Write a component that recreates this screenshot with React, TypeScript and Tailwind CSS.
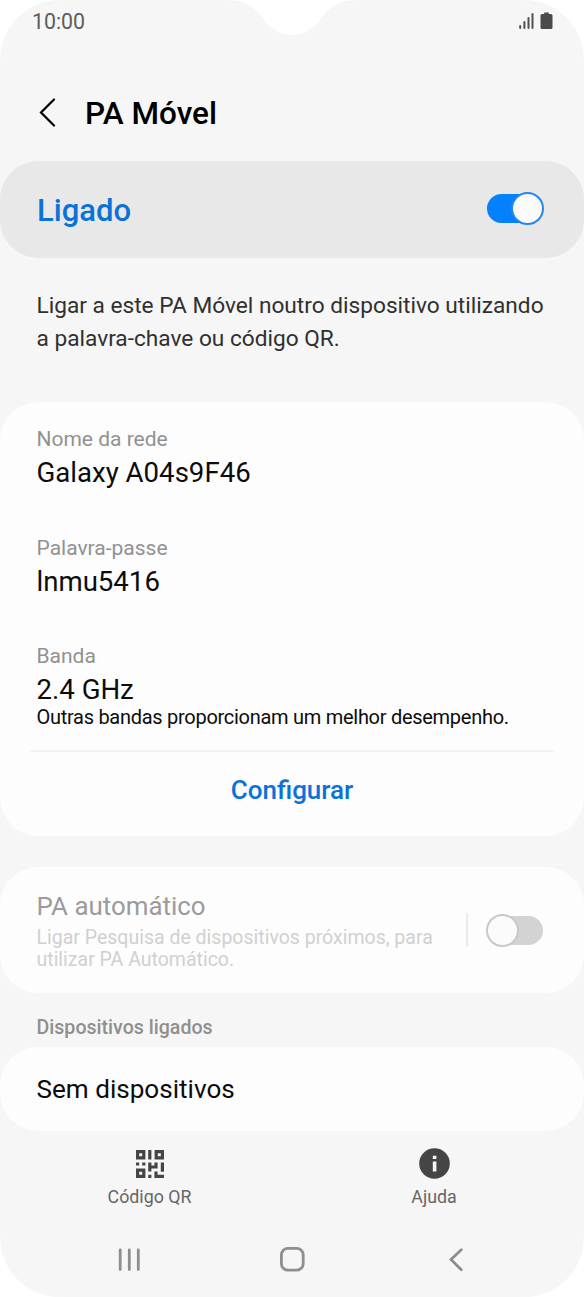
import clsx from "clsx";

const fields = [
  { label: "Nome da rede", value: "Galaxy A04s9F46" },
  { label: "Palavra-passe", value: "lnmu5416" },
  { label: "Banda", value: "2.4 GHz" },
];

function Toggle({ on }: { on: boolean }) {
  return (
    <div
      className={clsx(
        "relative h-[29px] w-[56px] shrink-0 rounded-full",
        on ? "bg-[#0381fe]" : "bg-[#d3d3d3]"
      )}
    >
      <span
        className={clsx(
          "absolute -top-[2px] size-[33px] rounded-full border-2 bg-[#fbfbfb]",
          on ? "-right-px border-[#2487ee]" : "-left-px border-[#c8c8c8]"
        )}
      />
    </div>
  );
}

function StatusBar() {
  return (
    <header className="relative flex h-[42px] items-center justify-between pr-[31px] pl-8 text-[#5c5c5c]">
      <span className="pt-px text-[21.300px] leading-[42px]">10:00</span>
      <svg
        className="absolute top-0 left-[230px]"
        width="124"
        height="36"
        viewBox="0 0 124 36"
        fill="#fff"
      >
        <path d="M0 0C16 1 26 8 33 18.500C40 29 51 35 62 35C73 35 84 29 91 18.500C98 8 108 1 124 0Z" />
      </svg>
      <svg width="34" height="18" viewBox="0 0 34 18">
        <path
          d="M1.200 14V16M5.400 10V16M9.500 6V16M13.500 2V16"
          stroke="#505050"
          strokeWidth="2"
          strokeLinecap="round"
        />
        <path
          d="M25.200 0.500h4.600v1.500h2.200q1.500 0 1.500 1.500v12q0 1.500-1.500 1.500h-9q-1.500 0-1.500-1.500v-12q0-1.500 1.500-1.500h2.200z"
          fill="#4a4a4a"
        />
      </svg>
    </header>
  );
}

function QrIcon() {
  return (
    <svg width="28" height="28" viewBox="0 0 28 28">
      <path
        d="M1.600 1.600h6.200v6.200h-6.200zM20.200 1.600h6.200v6.200h-6.200zM1.600 20.200h6.200v6.200h-6.200z"
        fill="none"
        stroke="#454545"
        strokeWidth="3.200"
      />
      <path
        d="M12.200 0h3.200v9.400h-3.200zM0 12.400h3.200v3.200h-3.200zM6.200 12.400h3.200v3.200h-3.200zM12.200 12.400h3.200v3h3v-3h3.200v6.200h-6.200v3h-3.200zM24.800 12.400h3.200v9.300h-3.200zM12.200 24.800h3.200v3.200h-3.200zM18.400 21.500h3.200v3.300h6.400v3.200h-9.600z"
        fill="#454545"
      />
    </svg>
  );
}

function InfoIcon() {
  return (
    <svg width="31" height="31" viewBox="0 0 31 31">
      <circle cx="15.500" cy="15.500" r="15.300" fill="#454545" />
      <path d="M13.800 7.800h3.600v3.200h-3.600zM13.800 13.500h3.600v10h-3.600z" fill="#f6f6f6" />
    </svg>
  );
}

function NavBar() {
  return (
    <nav className="flex h-[76px] justify-between pr-[120px] pl-[118px]">
      <svg width="22" height="76" viewBox="0 0 22 76" stroke="#8e8e8e" strokeWidth="2.800" strokeLinecap="round">
        <path d="M2.200 28.800V48.500M11.300 28.800V48.500M20.300 28.800V48.500" />
      </svg>
      <svg width="26" height="76" viewBox="0 0 26 76" fill="none" stroke="#8e8e8e" strokeWidth="2.800">
        <rect x="1.400" y="27.400" width="21.800" height="21.800" rx="6.500" />
      </svg>
      <svg width="18" height="76" viewBox="0 0 18 76" fill="none" stroke="#8e8e8e" strokeWidth="2.800" strokeLinecap="round">
        <path d="M15.300 28.700L5 38.500L15.300 48.700" />
      </svg>
    </nav>
  );
}

export default function App() {
  return (
    <div className="h-[1297px] w-[584px] bg-white font-['Roboto',sans-serif]">
      <div className="flex h-full flex-col overflow-hidden rounded-[60px] bg-[#f6f6f6]">
        <StatusBar />

        <div className="flex h-[119px] items-center gap-[29px] pt-[22px] pl-[39px]">
          <svg width="17" height="30" viewBox="0 0 17 30" fill="none" stroke="#000" strokeWidth="2.200" strokeLinecap="round">
            <path d="M15 1.500L2 14.500L15 27.500" />
          </svg>
          <h1 className="pt-[3px] text-[31.500px] leading-9 font-medium text-black">PA Móvel</h1>
        </div>

        <section className="flex h-[97px] items-center justify-between rounded-[38px] bg-[#e8e8e8] pr-[41px] pl-[37px]">
          <span className="pt-[2px] text-[31px] leading-9 font-medium text-[#0a72d8]">Ligado</span>
          <div className="pb-[2px]">
            <Toggle on />
          </div>
        </section>

        <p className="h-[144px] px-[36.500px] pt-[30.500px] text-[22.660px] leading-[33px] whitespace-nowrap text-[#303030]">
          Ligar a este PA Móvel noutro dispositivo utilizando
          <br />a palavra-chave ou código QR.
        </p>

        <section className="flex h-[434px] flex-col rounded-[38px] bg-[#fdfdfd] pt-[24px]">
          <dl className="flex flex-col gap-[40.600px] px-[36.500px]">
            {fields.map((field) => (
              <div key={field.label}>
                <dt className="text-[21px] leading-[26px] text-[#919191]">{field.label}</dt>
                <dd className="text-[27.600px] leading-[42px] text-[#0c0c0c]">{field.value}</dd>
              </div>
            ))}
          </dl>
          <p className="-mt-[2px] px-[36.500px] text-[20px] leading-[17px] tracking-[-0.280px] whitespace-nowrap text-[#0c0c0c]">
            Outras bandas proporcionam um melhor desempenho.
          </p>
          <div className="mx-[30px] mt-[24px] h-[2px] bg-[#f3f3f3]" />
          <button className="flex-1 pb-[7px] text-[26px] font-medium text-[#0a72d8]">Configurar</button>
        </section>

        <section className="mt-[31px] flex h-[126px] items-center rounded-[38px] bg-[#fdfdfd] pr-[41px] pl-[36.500px]">
          <div className="flex-1 pb-px whitespace-nowrap">
            <h2 className="text-[25.900px] leading-[39px] text-[#9b9b9b]">PA automático</h2>
            <p className="pt-[0.500px] text-[19.500px] leading-[22.500px] text-[#d0d0d0]">
              Ligar Pesquisa de dispositivos próximos, para
              <br />
              utilizar PA Automático.
            </p>
          </div>
          <div className="mr-[19px] mb-px h-[34px] w-[2px] bg-[#ebebeb]" />
          <Toggle on={false} />
        </section>

        <h3 className="h-[54px] px-[36.500px] pt-[15px] text-[19.600px] leading-[39px] font-medium text-[#8f8f8f]">
          Dispositivos ligados
        </h3>
        <section className="flex h-[84px] items-center rounded-[38px] bg-[#fdfdfd] px-[36.500px] pt-[2px] text-[26.100px] text-[#0c0c0c]">
          Sem dispositivos
        </section>

        <div className="flex h-[90px] text-[17.800px] leading-6 text-[#666]">
          <button className="ml-[50px] flex w-[199px] flex-col items-center pt-[19px]">
            <QrIcon />
            <span className="pt-[7px]">Código QR</span>
          </button>
          <button className="ml-[85px] flex w-[200px] flex-col items-center pt-[17px]">
            <InfoIcon />
            <span className="pt-[6px]">Ajuda</span>
          </button>
        </div>
        <NavBar />
      </div>
    </div>
  );
}
